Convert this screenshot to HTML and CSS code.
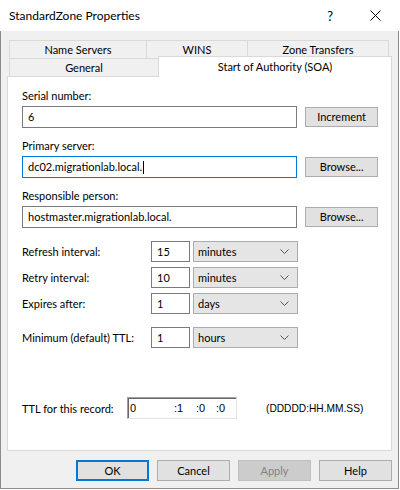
FILE: index.html
```
<!DOCTYPE html>
<html lang="en">

<head>
    <meta charset="UTF-8">
    <meta name="viewport" content="width=device-width, initial-scale=1.0">
    <title>StandardZone Properties</title>
    <link rel="stylesheet" href="styles.css">
</head>

<body>
    <div class="window">
        <div class="titlebar">
            <span class="title">StandardZone Properties</span>
            <span class="title-help">?</span>
            <svg class="title-close" width="11" height="11" viewBox="0 0 11 11">
                <path d="M0.5 0.5 L10.5 10.5 M10.5 0.5 L0.5 10.5" stroke="#000" stroke-width="1" fill="none" />
            </svg>
        </div>

        <div class="content">
            <div class="tabs">
                <div class="tab-row">
                    <div class="tab tab-ns">Name Servers</div>
                    <div class="tab tab-wins">WINS</div>
                    <div class="tab tab-zt">Zone Transfers</div>
                </div>
                <div class="tab-row">
                    <div class="tab tab-general">General</div>
                    <div class="tab tab-soa active">Start of Authority (SOA)</div>
                </div>
            </div>

            <div class="panel">
                <div class="field">
                    <div class="label">Serial number:</div>
                    <div class="field-row">
                        <div class="textbox">6</div>
                        <div class="btn">Increment</div>
                    </div>
                </div>
                <div class="field">
                    <div class="label">Primary server:</div>
                    <div class="field-row">
                        <div class="textbox focused">dc02.migrationlab.local.<span class="caret"></span></div>
                        <div class="btn">Browse...</div>
                    </div>
                </div>
                <div class="field">
                    <div class="label">Responsible person:</div>
                    <div class="field-row">
                        <div class="textbox">hostmaster.migrationlab.local.</div>
                        <div class="btn">Browse...</div>
                    </div>
                </div>

                <div class="intervals">
                    <div class="interval">
                        <div class="interval-label">Refresh interval:</div>
                        <div class="numbox">15</div>
                        <div class="combo">minutes<svg class="chevron" width="9" height="5" viewBox="0 0 9 5"><path d="M0.5 0.5 L4.5 4.5 L8.5 0.5" stroke="#555" fill="none" /></svg></div>
                    </div>
                    <div class="interval">
                        <div class="interval-label">Retry interval:</div>
                        <div class="numbox">10</div>
                        <div class="combo">minutes<svg class="chevron" width="9" height="5" viewBox="0 0 9 5"><path d="M0.5 0.5 L4.5 4.5 L8.5 0.5" stroke="#555" fill="none" /></svg></div>
                    </div>
                    <div class="interval">
                        <div class="interval-label">Expires after:</div>
                        <div class="numbox">1</div>
                        <div class="combo">days<svg class="chevron" width="9" height="5" viewBox="0 0 9 5"><path d="M0.5 0.5 L4.5 4.5 L8.5 0.5" stroke="#555" fill="none" /></svg></div>
                    </div>
                    <div class="interval interval-min">
                        <div class="interval-label">Minimum (default) TTL:</div>
                        <div class="numbox">1</div>
                        <div class="combo">hours<svg class="chevron" width="9" height="5" viewBox="0 0 9 5"><path d="M0.5 0.5 L4.5 4.5 L8.5 0.5" stroke="#555" fill="none" /></svg></div>
                    </div>
                </div>

                <div class="ttl">
                    <div class="ttl-label">TTL for this record:</div>
                    <div class="ttl-box">
                        <span class="seg seg-d">0</span>
                        <span class="seg seg-h">:1</span>
                        <span class="seg seg-m">:0</span>
                        <span class="seg">:0</span>
                    </div>
                    <div class="ttl-format">(DDDDD:HH.MM.SS)</div>
                </div>
            </div>

            <div class="buttons">
                <div class="btn dlg-btn default">OK</div>
                <div class="btn dlg-btn">Cancel</div>
                <div class="btn dlg-btn disabled">Apply</div>
                <div class="btn dlg-btn">Help</div>
            </div>
        </div>
    </div>
</body>

</html>
```

FILE: styles.css
```
* {
    margin: 0;
    padding: 0;
    box-sizing: border-box;
}

body {
    background-color: #fff;
    font-family: Lato, "Noto Sans", sans-serif;
    font-size: 11px;
    color: #000;
}

.window {
    width: 399px;
    height: 489px;
    display: flex;
    flex-direction: column;
}

/* title bar */
.titlebar {
    height: 31px;
    background-color: #fff;
    display: flex;
    align-items: center;
    padding-left: 9px;
    padding-right: 18px;
}

.title {
    flex: 1;
    font-size: 12px;
}

.title-help {
    font-size: 13px;
    margin-right: 37px;
}

.title-close {
    display: block;
}

/* dialog body */
.content {
    flex: 1;
    background-color: #f0f0f0;
    border: 1px solid #8c8c8c;
    border-top: none;
    padding: 9px 6px 0 6px;
}

/* tabs */
.tabs {
    padding-left: 2px;
}

.tab-row {
    display: flex;
}

.tab {
    height: 18px;
    line-height: 17px;
    text-align: center;
    background-color: #f0f0f0;
    border: 1px solid #d9d9d9;
    border-bottom: none;
}

.tab + .tab {
    margin-left: -1px;
}

.tab-ns {
    width: 138px;
}

.tab-wins {
    width: 102px;
}

.tab-zt {
    width: 142px;
}

.tab-general {
    width: 150px;
}

.tab-soa {
    width: 234px;
}

.tab.active {
    position: relative;
    z-index: 1;
    height: 21px;
    line-height: 19px;
    margin-top: -2px;
    margin-bottom: -1px;
    background-color: #fff;
}

.panel {
    height: 375px;
    background-color: #fff;
    border: 1px solid #d9d9d9;
    padding: 11px 13px 0 14px;
}

/* text fields */
.field + .field {
    margin-top: 10px;
}

.label {
    height: 15px;
    line-height: 15px;
    margin-bottom: 3px;
}

.field-row {
    display: flex;
    align-items: center;
    gap: 8px;
}

.textbox {
    width: 276px;
    height: 22px;
    line-height: 20px;
    padding-left: 5px;
    border: 1px solid #7a7a7a;
    white-space: nowrap;
}

.textbox.focused {
    border-color: #0078d7;
}

.caret {
    display: inline-block;
    width: 1px;
    height: 13px;
    margin-left: 1px;
    background-color: #000;
    vertical-align: -3px;
}

.btn {
    width: 73px;
    height: 20px;
    line-height: 18px;
    text-align: center;
    background-color: #e1e1e1;
    border: 1px solid #adadad;
}

/* refresh / retry / expire rows */
.intervals {
    margin-top: 13px;
}

.interval {
    display: flex;
    align-items: center;
    height: 21px;
}

.interval + .interval {
    margin-top: 5px;
}

.interval.interval-min {
    margin-top: 13px;
}

.interval-label {
    width: 129px;
}

.numbox {
    width: 39px;
    height: 21px;
    line-height: 19px;
    padding-left: 5px;
    border: 1px solid #7a7a7a;
}

.combo {
    width: 105px;
    height: 21px;
    line-height: 19px;
    margin-left: 3px;
    padding-left: 4px;
    padding-right: 8px;
    display: flex;
    align-items: center;
    justify-content: space-between;
    background-color: #e5e5e5;
    border: 1px solid #acacac;
}

/* ttl row */
.ttl {
    display: flex;
    align-items: center;
    margin-top: 49px;
}

.ttl-label {
    width: 105px;
}

.ttl-box {
    width: 110px;
    height: 22px;
    display: flex;
    align-items: center;
    font-family: "Liberation Sans", Arial, sans-serif;
    font-size: 11px;
    border-top: 1px solid #a0a0a0;
    border-left: 1px solid #a0a0a0;
    border-right: 1px solid #e3e3e3;
    border-bottom: 1px solid #e3e3e3;
    box-shadow: inset 1px 1px 0 #696969;
    padding-left: 2px;
}

.seg-d {
    width: 44px;
}

.seg-h {
    width: 22px;
}

.seg-m {
    width: 20px;
}

.ttl-format {
    margin-left: 29px;
    font-family: "Liberation Sans", Arial, sans-serif;
    font-size: 10.2px;
}

/* dialog buttons */
.buttons {
    display: flex;
    justify-content: flex-end;
    gap: 8px;
    margin-top: 9px;
}

.dlg-btn {
    height: 21px;
    line-height: 19px;
}

.dlg-btn.default {
    border: 2px solid #0078d7;
    line-height: 17px;
}

.dlg-btn.disabled {
    background-color: #cccccc;
    border-color: #bfbfbf;
    color: #838383;
}
```
